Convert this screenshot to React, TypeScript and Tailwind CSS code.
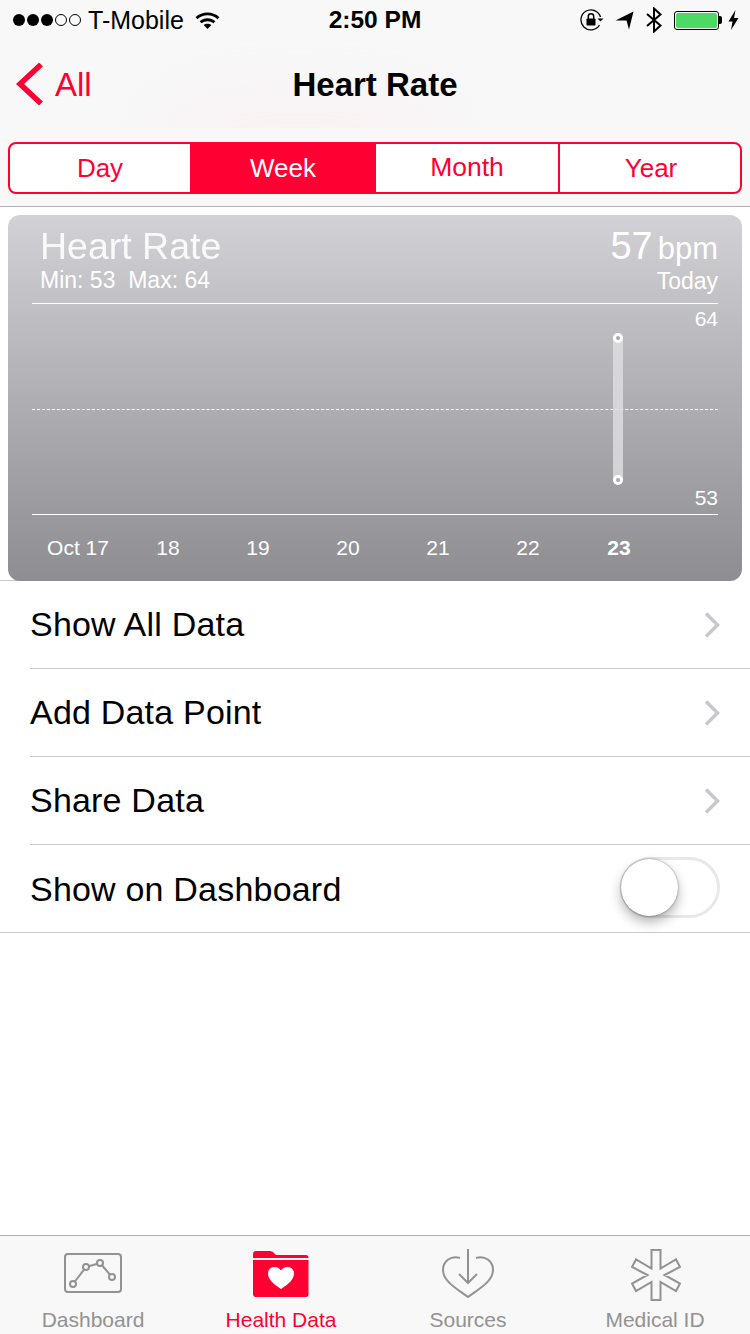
const ranges = ["Day", "Week", "Month", "Year"];
const days = ["Oct 17", "18", "19", "20", "21", "22", "23"];
const rows = ["Show All Data", "Add Data Point", "Share Data"];

function StatusBar() {
  return (
    <div className="flex h-10 items-center text-black">
      <div className="flex w-[300px] items-center pl-[13px]">
        <div className="flex items-center gap-[2px]">
          {[0, 1, 2].map((i) => (
            <span key={i} className="h-[12px] w-[12px] rounded-full bg-black" />
          ))}
          {[0, 1].map((i) => (
            <span key={i} className="h-[12px] w-[12px] rounded-full border border-black" />
          ))}
        </div>
        <span className="ml-[7px] text-[25px] leading-none">T-Mobile</span>
        <svg className="ml-[11px]" width="25" height="18" viewBox="0 0 25 18">
          <path d="M0.5 6.2C7 0 18 0 24.5 6.2L22.6 8.3C17 3 8 3 2.4 8.3Z" fill="#000" />
          <path d="M4.6 10.3C9 6.2 16 6.2 20.4 10.3L18.4 12.3C15 9.4 10 9.4 6.6 12.3Z" fill="#000" />
          <path d="M8.6 14.1C10.8 12.3 14.2 12.3 16.4 14.1L12.5 18Z" fill="#000" />
        </svg>
      </div>
      <div className="w-[150px] text-center text-[24.5px] leading-none font-bold">2:50 PM</div>
      <div className="flex flex-1 items-center pl-[130px]">
        <svg width="24" height="22" viewBox="0 0 24 22">
          <path d="M20.5 8A10 10 0 1 0 19.5 16" fill="none" stroke="#000" strokeWidth="1.3" />
          <path d="M17.5 9.5H23.5L20.5 12.5Z" fill="#000" />
          <rect x="6.5" y="9.5" width="9" height="7" rx="0.8" fill="#000" />
          <path d="M8.3 10V7.5A2.7 2.7 0 0 1 13.7 7.5V10" fill="none" stroke="#000" strokeWidth="1.5" />
        </svg>
        <svg className="ml-[11px]" width="19" height="19" viewBox="0 0 19 19">
          <path d="M0.5 9.5L18.5 0.5L14 18.5L11.5 9.5Z" fill="#000" />
        </svg>
        <svg className="ml-[11px]" width="18" height="26" viewBox="0 0 18 26">
          <path d="M2 7L15.5 18.5L9 24.5V1.5L15.5 7.5L2 19" fill="none" stroke="#000" strokeWidth="2" />
        </svg>
        <div className="ml-[11px] flex items-center">
          <div className="h-[19px] w-[45px] rounded-[3px] border border-black p-[1px]">
            <div className="h-full w-full rounded-[2px] bg-[#4cd964]" />
          </div>
          <div className="h-[8px] w-[3px] rounded-r-[2px] bg-black" />
        </div>
        <svg className="ml-[6px]" width="11" height="20" viewBox="0 0 11 20">
          <path d="M7.5 0L0.5 11.5H4.5L3 20L10.5 8H6Z" fill="#000" />
        </svg>
      </div>
    </div>
  );
}

function NavBar() {
  return (
    <div className="relative flex h-[88px] items-center justify-center overflow-hidden">
      <div className="absolute top-[40px] left-[150px] h-[100px] w-[300px] rounded-[50%] bg-[#ffd8e0] opacity-15 blur-[24px]" />
      <div className="absolute top-0 left-[16px] flex h-full items-center text-[#ff0033]">
        <svg width="28" height="42" viewBox="0 0 28 42">
          <path d="M25 1.5L4 21L25 40.5" fill="none" stroke="#ff0033" strokeWidth="5.500" />
        </svg>
        <span className="ml-[11px] text-[33px] leading-none">All</span>
      </div>
      <span className="relative text-[33px] leading-none font-bold text-black">Heart Rate</span>
    </div>
  );
}

function Segments() {
  return (
    <div className="border-b border-[#b2b2b2] px-2 pt-[14px] pb-3">
      <div className="flex h-[52px] overflow-hidden rounded-[8px] border-2 border-[#ff0033] bg-white">
        {ranges.map((range) => (
          <div
            key={range}
            className={
              range === "Week"
                ? "flex w-[186px] items-center justify-center bg-[#ff0033] text-[26px] text-white"
                : range === "Day"
                  ? "flex w-[180px] items-center justify-center text-[26px] text-[#ff0033]"
                  : range === "Month"
                    ? "flex w-[184px] items-center justify-center border-r-2 border-[#ff0033] text-[26.5px] text-[#ff0033]"
                    : "flex flex-1 items-center justify-center pl-[2px] text-[26px] text-[#ff0033]"
            }
          >
            {range}
          </div>
        ))}
      </div>
    </div>
  );
}

function Chart() {
  return (
    <div className="relative h-[374px] bg-white px-2 pt-2">
      <div className="absolute bottom-0 left-0 h-px w-[30px] bg-[#c8c7cc]" />
      <div className="relative h-[366px] rounded-[12px] bg-gradient-to-b from-[#d2d1d6] to-[#8e8d92] text-white">
        <div className="flex h-[88px] justify-between px-[24px] pt-[11px]">
          <div className="pl-[8px]">
            <div className="text-[37.500px] leading-[41px] font-light opacity-90">Heart Rate</div>
            <div className="text-[23px] leading-[27px]">Min: 53&nbsp; Max: 64</div>
          </div>
          <div className="text-right">
            <div className="text-[38px] leading-[40px]">
              57<span className="ml-[5px] text-[31px]">bpm</span>
            </div>
            <div className="text-[23px] leading-[25px]">Today</div>
          </div>
        </div>
        <div className="relative mx-[24px] h-[212px] border-y border-white">
          <div className="absolute top-[105px] right-0 left-0 border-t border-dashed border-white" />
          <span className="absolute top-[4px] right-0 text-[21px] leading-[22px]">64</span>
          <span className="absolute right-0 bottom-[5px] text-[21px] leading-[22px]">53</span>
          <div className="absolute top-[34px] left-[581px] h-[142px] w-[10px] bg-[#e0e0e2]/80" />
          <div className="absolute top-[29px] left-[581px] h-[10px] w-[10px] rounded-full border-[3px] border-white bg-[#a9a8ad]" />
          <div className="absolute top-[171px] left-[581px] h-[10px] w-[10px] rounded-full border-[3px] border-white bg-[#a9a8ad]" />
        </div>
        <div className="flex pt-[21px] pl-[25px]">
          {days.map((day) => (
            <span
              key={day}
              className={
                day === "23"
                  ? "w-[90px] pl-[2px] text-center text-[21px] leading-[24px] font-bold"
                  : "w-[90px] text-center text-[21px] leading-[24px]"
              }
            >
              {day}
            </span>
          ))}
        </div>
      </div>
    </div>
  );
}

function Rows() {
  return (
    <div className="bg-white">
      {rows.map((row) => (
        <div key={row} className="ml-[30px] flex h-[88px] items-center justify-between border-b border-[#c8c7cc] pr-[30px]">
          <span className="text-[34px] tracking-[0.2px] text-black">{row}</span>
          <svg width="16" height="26" viewBox="0 0 16 26">
            <path d="M2 1.500L13.500 13L2 24.500" fill="none" stroke="#c7c7cc" strokeWidth="3.500" />
          </svg>
        </div>
      ))}
      <div className="flex h-[88px] items-center justify-between border-b border-[#c8c7cc] px-[30px]">
        <span className="pt-[1px] text-[34px] tracking-[0.2px] text-black">Show on Dashboard</span>
        <div className="relative mt-[-2px] h-[61px] w-[100px] rounded-full border-[3px] border-[#e8e8e8] bg-white">
          <div className="absolute top-[-1px] left-[-2px] h-[57px] w-[57px] rounded-full bg-white shadow-[0_6px_12px_rgba(0,0,0,0.3),0_0_2px_rgba(0,0,0,0.5)]" />
        </div>
      </div>
    </div>
  );
}

function TabBar() {
  return (
    <div className="mt-auto flex h-[99px] border-t border-[#b2b2b2] bg-[#f8f8f8] text-[21px] text-[#929292]">
      <div className="flex w-[186px] flex-col items-center">
        <svg className="mt-[16px]" width="60" height="42" viewBox="0 0 60 42">
          <rect x="2" y="2" width="56" height="38" rx="3" fill="none" stroke="#929292" strokeWidth="2" />
          <path d="M10 32L23 15L37 11L49 25" fill="none" stroke="#929292" strokeWidth="2" />
          <circle cx="10" cy="32" r="3" fill="#f8f8f8" stroke="#929292" strokeWidth="2" />
          <circle cx="23" cy="15" r="3" fill="#f8f8f8" stroke="#929292" strokeWidth="2" />
          <circle cx="37" cy="11" r="3" fill="#f8f8f8" stroke="#929292" strokeWidth="2" />
          <circle cx="49" cy="25" r="3" fill="#f8f8f8" stroke="#929292" strokeWidth="2" />
        </svg>
        <span className="mt-[14px] leading-[24px]">Dashboard</span>
      </div>
      <div className="flex w-[190px] flex-col items-center text-[#ff0033]">
        <svg className="mt-[15px]" width="56" height="46" viewBox="0 0 56 46">
          <path d="M0 7V3Q0 0 3 0H17Q20 0 22 3L23 4H53Q55.500 4 55.500 7V7Z" fill="#ff0033" />
          <path d="M0 9H55.500V43Q55.500 46 53 46H3Q0 46 0 43Z" fill="#ff0033" />
          <path d="M28 38C20 33 15 28 15 22.500C15 15 24.500 14 28 19.500C31.500 14 41 15 41 22.500C41 28 36 33 28 38Z" fill="#fff" />
        </svg>
        <span className="mt-[11px] leading-[24px]">Health Data</span>
      </div>
      <div className="flex w-[184px] flex-col items-center">
        <svg className="mt-[12px]" width="54" height="52" viewBox="0 0 54 52">
          <path d="M19 10C10 7 2 13 2 22C2 34 18 42 27 49C36 42 52 34 52 22C52 13 44 7 35 10" fill="none" stroke="#929292" strokeWidth="2" />
          <path d="M27 1V35M18 26L27 35L36 26" fill="none" stroke="#929292" strokeWidth="2" />
        </svg>
        <span className="mt-[8px] leading-[24px]">Sources</span>
      </div>
      <div className="flex flex-1 flex-col items-center">
        <svg className="mt-[13px] ml-[2px]" width="50" height="52" viewBox="0 0 50 52">
          <path
            d="M20.500 1H29.500V19.500L45 10.500L49 18L33.500 26L49 34.500L45 42L29.500 33V51H20.500V33L5 42L1 34.500L16.500 26L1 18L5 10.500L20.500 19.500Z"
            fill="none"
            stroke="#929292"
            strokeWidth="2"
          />
        </svg>
        <span className="mt-[7px] leading-[24px]">Medical ID</span>
      </div>
    </div>
  );
}

export default function App() {
  return (
    <div className="flex h-[1334px] w-[750px] flex-col bg-white font-['Liberation_Sans',Arial,sans-serif]">
      <div className="bg-[#f8f8f8]">
        <StatusBar />
        <NavBar />
        <Segments />
      </div>
      <Chart />
      <Rows />
      <TabBar />
    </div>
  );
}
